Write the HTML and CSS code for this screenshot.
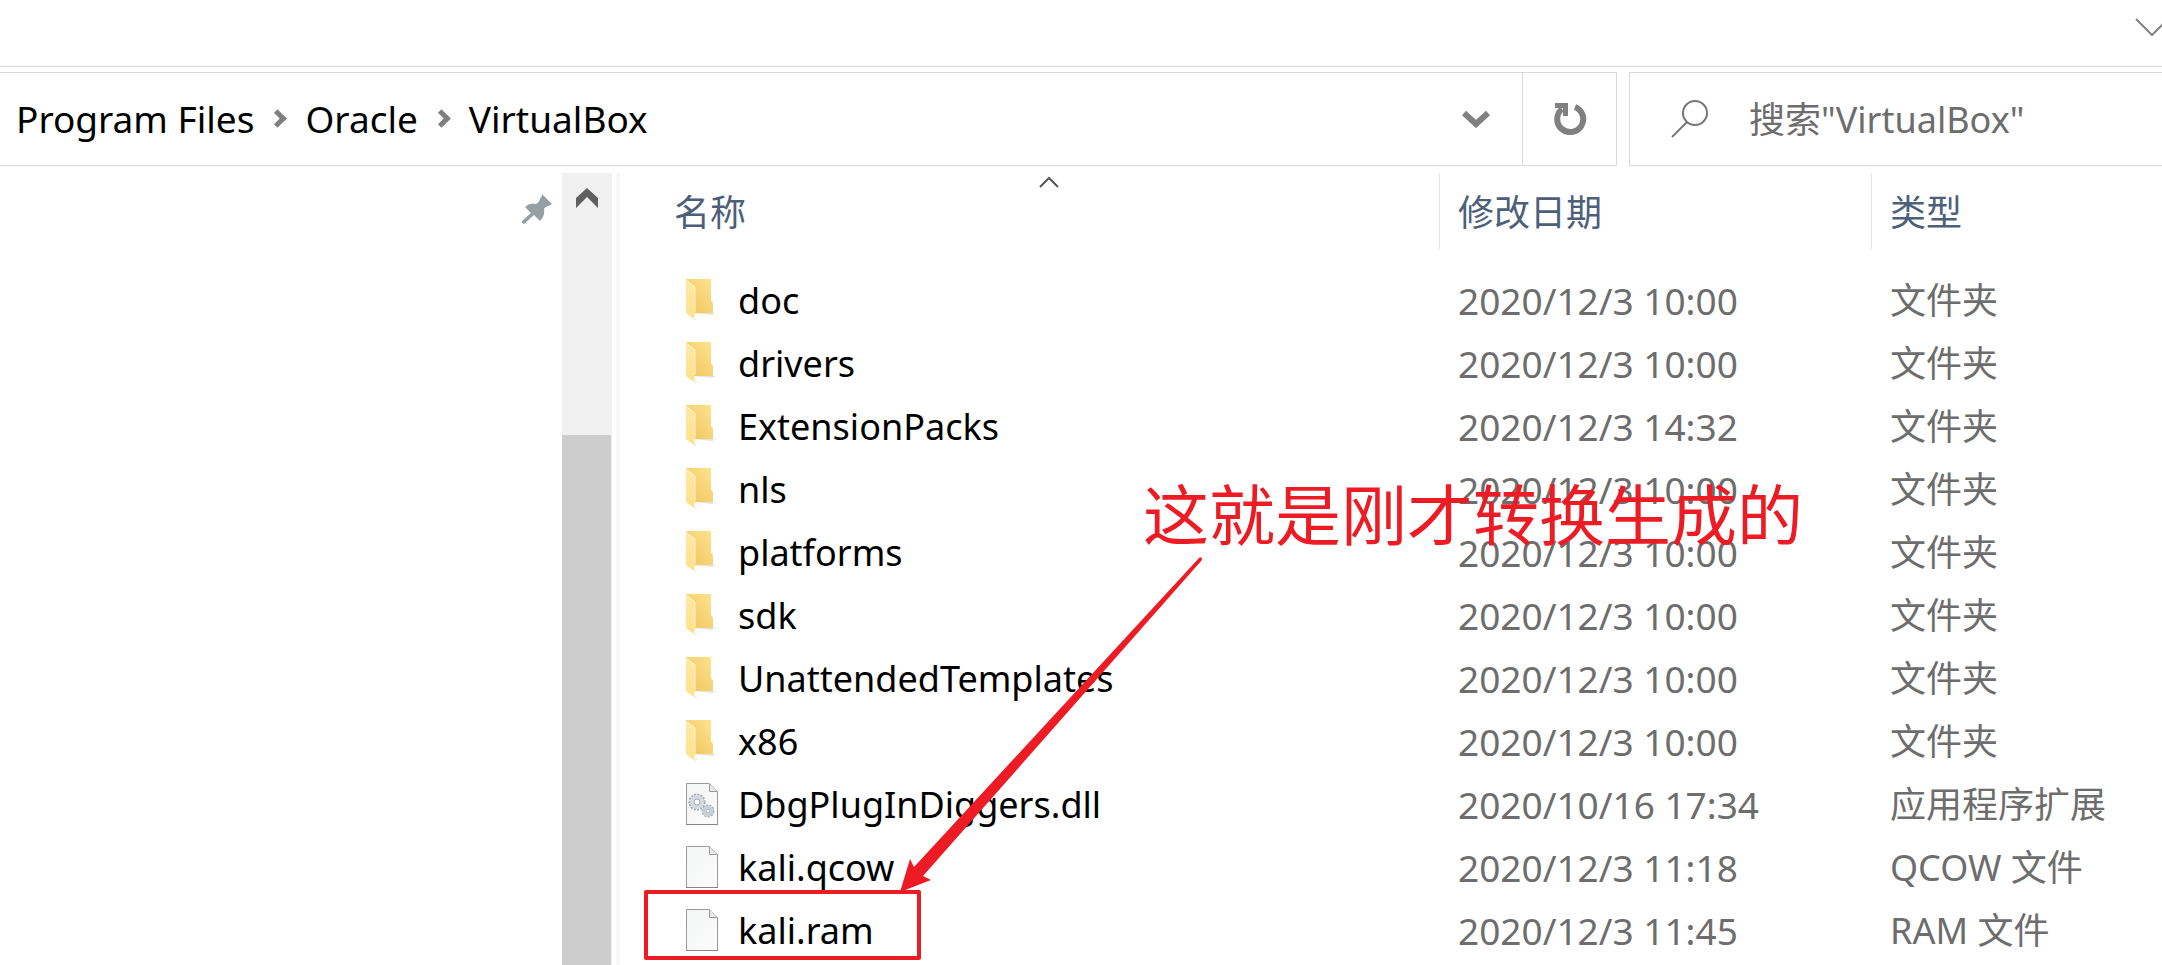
FILE: index.html
```html
<!DOCTYPE html>
<html lang="zh-CN">

<head>
  <meta charset="UTF-8">
  <meta name="viewport" content="width=device-width, initial-scale=1.0">
  <title>VirtualBox</title>
  <link rel="stylesheet" href="styles.css">
</head>

<body>
  <!-- shared icons -->
  <svg class="sprite" aria-hidden="true">
    <defs>
      <linearGradient id="folderBack" x1="0" x2="1" y1="1" y2="0">
        <stop offset="0" stop-color="#edc35e" />
        <stop offset="1" stop-color="#ffe48d" />
      </linearGradient>
      <linearGradient id="folderFront" x1="0" x2="0" y1="0" y2="1">
        <stop offset="0" stop-color="#ffe9a5" />
        <stop offset="1" stop-color="#ffe08a" />
      </linearGradient>
      <linearGradient id="paper" x1="0" x2="1" y1="0" y2="1">
        <stop offset="0" stop-color="#f4f5f5" />
        <stop offset="1" stop-color="#fbfbfb" />
      </linearGradient>
    </defs>
    <symbol id="folder" viewBox="0 0 32 42">
      <path d="M8 34h22l-4 2zM8 40l4-2-3 3z" fill="#e4e4e4" />
      <path d="M0 0h25v21l2 3v10H8L0 30z" fill="url(#folderBack)" />
      <path d="M0 1l9 7v25l-1 7-8-6z" fill="url(#folderFront)" />
      <path d="M0 1l9 7v25" fill="none" stroke="#fff3cf" stroke-width="1" />
    </symbol>
    <symbol id="file" viewBox="0 0 32 42">
      <path d="M.5.5h23l8 8v33H.5z" fill="url(#paper)" stroke="#9a9a9a" />
      <path d="M23.500.5v8h8" fill="#e8e8e8" stroke="#9a9a9a" />
      <path d="M0 41.500h32" stroke="#868686" />
    </symbol>
  </svg>

  <div class="ribbon">
    <button class="ribbon-toggle" aria-label="展开功能区">
      <svg width="34" height="19" viewBox="0 0 34 19"><path d="M1 1l16 16L33 1" fill="none" stroke="#858585" stroke-width="2" /></svg>
    </button>
  </div>

  <header class="toolbar">
    <nav class="address">
      <ul class="crumbs">
        <li><a href="#">Program Files</a></li>
        <li><a href="#">Oracle</a></li>
        <li><a href="#">VirtualBox</a></li>
      </ul>
      <button class="history" aria-label="历史记录">
        <svg width="28" height="18" viewBox="0 0 28 18"><path d="M2 3l12 11L26 3" fill="none" stroke="#808080" stroke-width="6" /></svg>
      </button>
      <button class="refresh" aria-label="刷新">
        <svg width="34" height="32" viewBox="0 0 34 32">
          <path d="M22 4A13 13 0 1 1 9 6" fill="none" stroke="#808080" stroke-width="6" />
          <path d="M2 0h13v13h-5V5H2z" fill="#808080" />
        </svg>
      </button>
    </nav>
    <label class="search">
      <svg width="38" height="38" viewBox="0 0 38 38"><circle cx="24" cy="13" r="12" fill="none" stroke="#777" stroke-width="2" /><path d="M16 22L1 37" stroke="#777" stroke-width="2" /></svg>
      <input type="text" placeholder='搜索"VirtualBox"' aria-label="搜索">
    </label>
  </header>

  <div class="content">
    <aside class="sidebar">
      <svg class="pin" width="30" height="30" viewBox="0 0 30 30"><path d="M20 0l10 10c-3 2-6 2-8 5 1 5-1 9-4 12l-6-6-10 9-2-1 0-2 9-8-6-6c3-3 6-4 11-3 4-2 3-5 6-8z" fill="#95a0a6" /></svg>
    </aside>
    <div class="scrollbar">
      <svg width="22" height="20" viewBox="0 0 22 20"><path d="M11 0l11 10v10L11 9 0 20V10z" fill="#606060" /></svg>
      <div class="thumb"></div>
    </div>

    <main class="files">
      <svg class="sort" width="20" height="12" viewBox="0 0 20 12"><path d="M1 11l9-9 9 9" fill="none" stroke="#555" stroke-width="2" /></svg>
      <table>
        <colgroup>
          <col>
          <col class="col-date">
          <col class="col-type">
        </colgroup>
        <thead>
          <tr>
            <th>名称</th>
            <th>修改日期</th>
            <th>类型</th>
          </tr>
        </thead>
        <tbody>
          <tr>
            <td><svg class="icon"><use href="#folder" /></svg>doc</td>
            <td class="date">2020/12/3 10:00</td>
            <td>文件夹</td>
          </tr>
          <tr>
            <td><svg class="icon"><use href="#folder" /></svg>drivers</td>
            <td class="date">2020/12/3 10:00</td>
            <td>文件夹</td>
          </tr>
          <tr>
            <td><svg class="icon"><use href="#folder" /></svg>ExtensionPacks</td>
            <td class="date">2020/12/3 14:32</td>
            <td>文件夹</td>
          </tr>
          <tr>
            <td><svg class="icon"><use href="#folder" /></svg>nls</td>
            <td class="date">2020/12/3 10:00</td>
            <td>文件夹</td>
          </tr>
          <tr>
            <td><svg class="icon"><use href="#folder" /></svg>platforms</td>
            <td class="date">2020/12/3 10:00</td>
            <td>文件夹</td>
          </tr>
          <tr>
            <td><svg class="icon"><use href="#folder" /></svg>sdk</td>
            <td class="date">2020/12/3 10:00</td>
            <td>文件夹</td>
          </tr>
          <tr>
            <td><svg class="icon"><use href="#folder" /></svg>UnattendedTemplates</td>
            <td class="date">2020/12/3 10:00</td>
            <td>文件夹</td>
          </tr>
          <tr>
            <td><svg class="icon"><use href="#folder" /></svg>x86</td>
            <td class="date">2020/12/3 10:00</td>
            <td>文件夹</td>
          </tr>
          <tr>
            <td>
              <svg class="icon" viewBox="0 0 32 42">
                <use href="#file" />
                <g fill="none" stroke="#a3adb4">
                  <circle cx="11" cy="19" r="7" stroke-width="3" stroke-dasharray="2 1" />
                  <circle cx="11" cy="19" r="5" stroke="#d3dae0" stroke-width="4" />
                  <circle cx="11" cy="19" r="3" fill="#fff" />
                  <circle cx="22" cy="28" r="5" stroke-width="3" stroke-dasharray="2 1" />
                  <circle cx="22" cy="28" r="4" stroke="#c6d0d7" stroke-width="3" />
                  <circle cx="22" cy="28" r="2" fill="#fff" />
                </g>
              </svg>DbgPlugInDiggers.dll
            </td>
            <td class="date">2020/10/16 17:34</td>
            <td>应用程序扩展</td>
          </tr>
          <tr>
            <td><svg class="icon"><use href="#file" /></svg>kali.qcow</td>
            <td class="date">2020/12/3 11:18</td>
            <td>QCOW 文件</td>
          </tr>
          <tr>
            <td><svg class="icon"><use href="#file" /></svg>kali.ram</td>
            <td class="date">2020/12/3 11:45</td>
            <td>RAM 文件</td>
          </tr>
        </tbody>
      </table>

      <!-- red marks drawn over the list -->
      <div class="mark-box"></div>
      <svg class="mark-arrow" width="304" height="338" viewBox="0 0 304 338"><path d="M0 336L10 303l4 8L299 2q3-2 3 2L23 320l8 4z" fill="#ed1c24" /></svg>
      <p class="mark-text">这就是刚才转换生成的</p>
    </main>
  </div>
</body>

</html>
```

FILE: styles.css
```css
* {
  box-sizing: border-box;
}

body {
  margin: 0;
  height: 100vh;
  display: flex;
  flex-direction: column;
  overflow: hidden;
  background-color: #fff;
  color: #000;
  font-family: "Noto Sans", "Noto Sans CJK SC", sans-serif;
  font-size: 36px;
}

button {
  padding: 0;
  border: 0;
  background: none;
  display: flex;
  align-items: center;
  justify-content: center;
}

.sprite {
  position: absolute;
  width: 0;
  height: 0;
}

/* ribbon */
.ribbon {
  height: 67px;
  flex: none;
  display: flex;
  justify-content: flex-end;
  align-items: flex-start;
  padding-top: 18px;
  border-bottom: 1px solid #d9d9d9;
}

.ribbon-toggle {
  margin-right: -7px;
}

/* address bar and search */
.toolbar {
  flex: none;
  height: 94px;
  margin-top: 5px;
  display: flex;
  gap: 12px;
}

.address {
  flex: 1;
  display: flex;
  border: 1px solid #d9d9d9;
  border-left: 0;
}

.crumbs {
  flex: 1;
  list-style: none;
  margin: 0;
  padding: 0 0 2px 16px;
  display: flex;
  align-items: center;
  font-size: 37px;
}

.crumbs li {
  display: flex;
  align-items: center;
}

.crumbs li + li::before {
  content: "";
  width: 8px;
  height: 8px;
  margin: 0 21px 0 17px;
  border: solid #808080;
  border-width: 5px 5px 0 0;
  transform: rotate(45deg);
}

.crumbs a {
  color: #000;
  text-decoration: none;
}

.history {
  width: 92px;
}

.refresh {
  width: 94px;
  border-left: 1px solid #d9d9d9;
}

.search {
  width: 533px;
  display: flex;
  align-items: center;
  gap: 40px;
  padding-left: 41px;
  border: 1px solid #d9d9d9;
  border-right: 0;
}

.search svg {
  flex: none;
}

.search input {
  flex: 1;
  min-width: 0;
  padding: 0;
  border: 0;
  outline: 0;
  background: none;
  font: inherit;
}

.search input::placeholder {
  color: #6d6d6d;
}

/* main area */
.content {
  flex: 1;
  min-height: 0;
  display: flex;
  padding-top: 7px;
}

.sidebar {
  width: 562px;
  flex: none;
  display: flex;
  justify-content: flex-end;
  align-items: flex-start;
  padding: 21px 10px 0 0;
}

.scrollbar {
  width: 50px;
  flex: none;
  display: flex;
  flex-direction: column;
  align-items: center;
  padding-top: 15px;
  background-color: #f0f0f0;
}

.scrollbar svg {
  flex: none;
}

.thumb {
  flex: 1;
  width: 100%;
  margin-top: 227px;
  border-right: 1px solid #f0f0f0;
  background-color: #cdcdcd;
}

.files {
  position: relative;
  flex: 1;
  margin-left: 4px;
  border-left: 4px solid #f7f7f7;
}

/* file list */
table {
  width: 100%;
  table-layout: fixed;
  border-collapse: separate;
  border-spacing: 0;
}

.col-date {
  width: 432px;
}

.col-type {
  width: 291px;
}

th {
  height: 76px;
  padding: 0 0 2px 18px;
  border-left: 1px solid #e5e5e5;
  color: #4c607a;
  font-weight: normal;
  text-align: left;
}

th:first-child {
  padding-left: 54px;
  border-left: 0;
}

tbody::before {
  content: "";
  display: block;
  height: 20px;
}

td {
  height: 63px;
  padding: 0 0 0 19px;
  color: #6d6d6d;
  line-height: 62px;
  white-space: nowrap;
}

td:first-child {
  padding-left: 66px;
  color: #000;
}

.date {
  font-size: 37px;
}

.icon {
  width: 32px;
  height: 42px;
  margin: 0 20px 8px 0;
  vertical-align: middle;
}

.sort {
  position: absolute;
  top: 3px;
  left: 419px;
}

/* red marks */
.mark-box {
  position: absolute;
  top: 717px;
  left: 24px;
  width: 277px;
  height: 70px;
  border: 4px solid #ed1c24;
  border-radius: 2px;
}

.mark-arrow {
  position: absolute;
  top: 383px;
  left: 280px;
}

.mark-text {
  position: absolute;
  top: 290px;
  left: 523px;
  margin: 0;
  color: #ed1c24;
  font-family: "Noto Sans CJK SC", sans-serif;
  font-size: 66px;
  line-height: 96px;
  white-space: nowrap;
}
```
